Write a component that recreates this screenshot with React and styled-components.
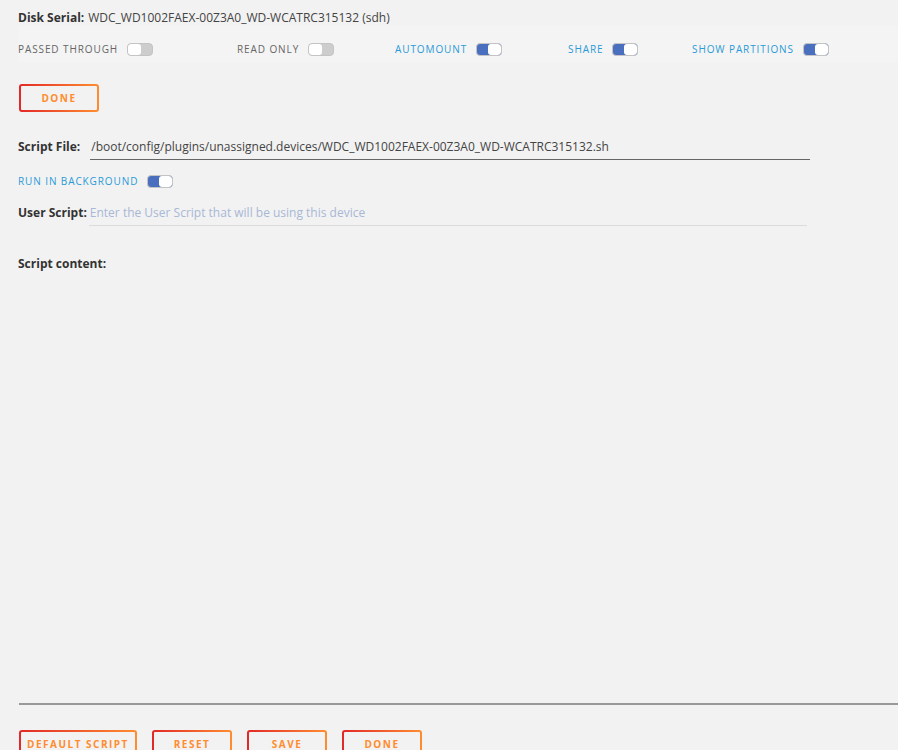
import React from "react";
import styled, { createGlobalStyle } from "styled-components";

const Global = createGlobalStyle`
  html, body { margin: 0; padding: 0; background: #f2f2f2; }
  body { font-family: "Open Sans", "Noto Sans", sans-serif; color: #333; }
  * { box-sizing: border-box; }
`;

const Page = styled.div`
  padding: 9px 0 0 18px;
  width: 898px;
  height: 750px;
  overflow: hidden;
`;

const Line = styled.div`
  display: flex;
  align-items: center;
  font-size: 12px;
  height: 17px;
  color: #444;
`;

const Label = styled.span`
  font-weight: 700;
  color: #333;
  margin-right: 4px;
`;

const Band = styled.div`
  background: #f4f4f4;
  height: 36px;
  padding-top: 13px;
  display: grid;
  grid-template-columns: 219px 158px 173px 124px 1fr;
  grid-auto-rows: 20px;
  align-items: center;
`;

const SwitchItem = styled.div`
  display: flex;
  align-items: center;
  height: 12px;
`;

const SwitchLabel = styled.span`
  font-size: 10px;
  letter-spacing: 0.9px;
  text-transform: uppercase;
  color: ${(p) => (p.$on ? "#2a9ad8" : "#666")};
  margin-right: 9px;
  white-space: nowrap;
`;

const Toggle = styled.span`
  position: relative;
  display: inline-block;
  width: 26px;
  height: 13px;
  border-radius: 4px;
  border: 1px solid #c4c4c4;
  background: ${(p) => (p.$on ? "#4a6fbe" : "#cdcdcd")};
  overflow: hidden;
  &::after {
    content: "";
    position: absolute;
    top: 0;
    bottom: 0;
    ${(p) => (p.$on ? "right: 0;" : "left: 0;")}
    width: 13px;
    border-radius: 3px;
    background: #fff;
  }
`;

const Button = styled.button`
  width: ${(p) => p.$w || 80}px;
  height: 28px;
  padding: 0;
  border: 2px solid transparent;
  border-radius: 3px;
  background:
    linear-gradient(#f2f2f2, #f2f2f2) padding-box,
    linear-gradient(90deg, #e22828, #ff8d30) border-box;
  color: #ff8c2f;
  font-family: "Open Sans", "Noto Sans", sans-serif;
  font-weight: 700;
  font-size: 10px;
  letter-spacing: 1.5px;
  text-transform: uppercase;
  cursor: pointer;
`;

const TopButtonWrap = styled.div`
  margin-top: 22px;
  margin-left: 1px;
`;

const FieldRow = styled.div`
  display: flex;
  align-items: flex-end;
  margin-top: ${(p) => p.$mt || 0}px;
  font-size: 12px;
`;

const FieldInput = styled.input`
  width: ${(p) => p.$w}px;
  border: none;
  border-bottom: 1px solid ${(p) => (p.$dark ? "#666" : "#dcdcdc")};
  background: transparent;
  font-family: "Open Sans", "Noto Sans", sans-serif;
  font-size: 12px;
  color: #444;
  padding: 0 0 4px 1px;
  outline: none;
  &::placeholder { color: #a8b8d6; }
`;

const FieldLabel = styled.label`
  font-weight: 700;
  color: #333;
  padding-bottom: 5px;
  margin-right: ${(p) => p.$gap}px;
`;

const BgRow = styled.div`
  display: flex;
  align-items: center;
  margin-top: 14px;
  height: 14px;
`;

const ContentLabel = styled.div`
  font-size: 12px;
  font-weight: 700;
  margin-top: 29px;
  color: #333;
`;

const Editor = styled.textarea`
  display: block;
  width: 880px;
  height: 433px;
  margin: 0 0 0 1px;
  border: none;
  border-bottom: 2px solid #999;
  background: transparent;
  resize: none;
  outline: none;
`;

const Actions = styled.div`
  display: flex;
  gap: 15px;
  margin-top: 25px;
  margin-left: 1px;
`;

const items = [
  ["Passed Through", false],
  ["Read Only", false],
  ["Automount", true],
  ["Share", true],
  ["Show Partitions", true],
];

export default function App() {
  return (
    <Page>
      <Global />
      <Line>
        <Label>Disk Serial:</Label>
        WDC_WD1002FAEX-00Z3A0_WD-WCATRC315132 (sdh)
      </Line>
      <Band>
        {items.map(([l, on]) => (
          <SwitchItem key={l}>
            <SwitchLabel $on={on}>{l}</SwitchLabel>
            <Toggle $on={on} />
          </SwitchItem>
        ))}
      </Band>
      <TopButtonWrap>
        <Button>Done</Button>
      </TopButtonWrap>
      <FieldRow $mt={26}>
        <FieldLabel $gap={10}>Script File:</FieldLabel>
        <FieldInput
          $w={720}
          $dark
          readOnly
          value="/boot/config/plugins/unassigned.devices/WDC_WD1002FAEX-00Z3A0_WD-WCATRC315132.sh"
        />
      </FieldRow>
      <BgRow>
        <SwitchLabel $on>Run in Background</SwitchLabel>
        <Toggle $on />
      </BgRow>
      <FieldRow $mt={16}>
        <FieldLabel $gap={2}>User Script:</FieldLabel>
        <FieldInput $w={718} placeholder="Enter the User Script that will be using this device" />
      </FieldRow>
      <ContentLabel>Script content:</ContentLabel>
      <Editor />
      <Actions>
        <Button $w={118}>Default Script</Button>
        <Button>Reset</Button>
        <Button>Save</Button>
        <Button>Done</Button>
      </Actions>
    </Page>
  );
}
